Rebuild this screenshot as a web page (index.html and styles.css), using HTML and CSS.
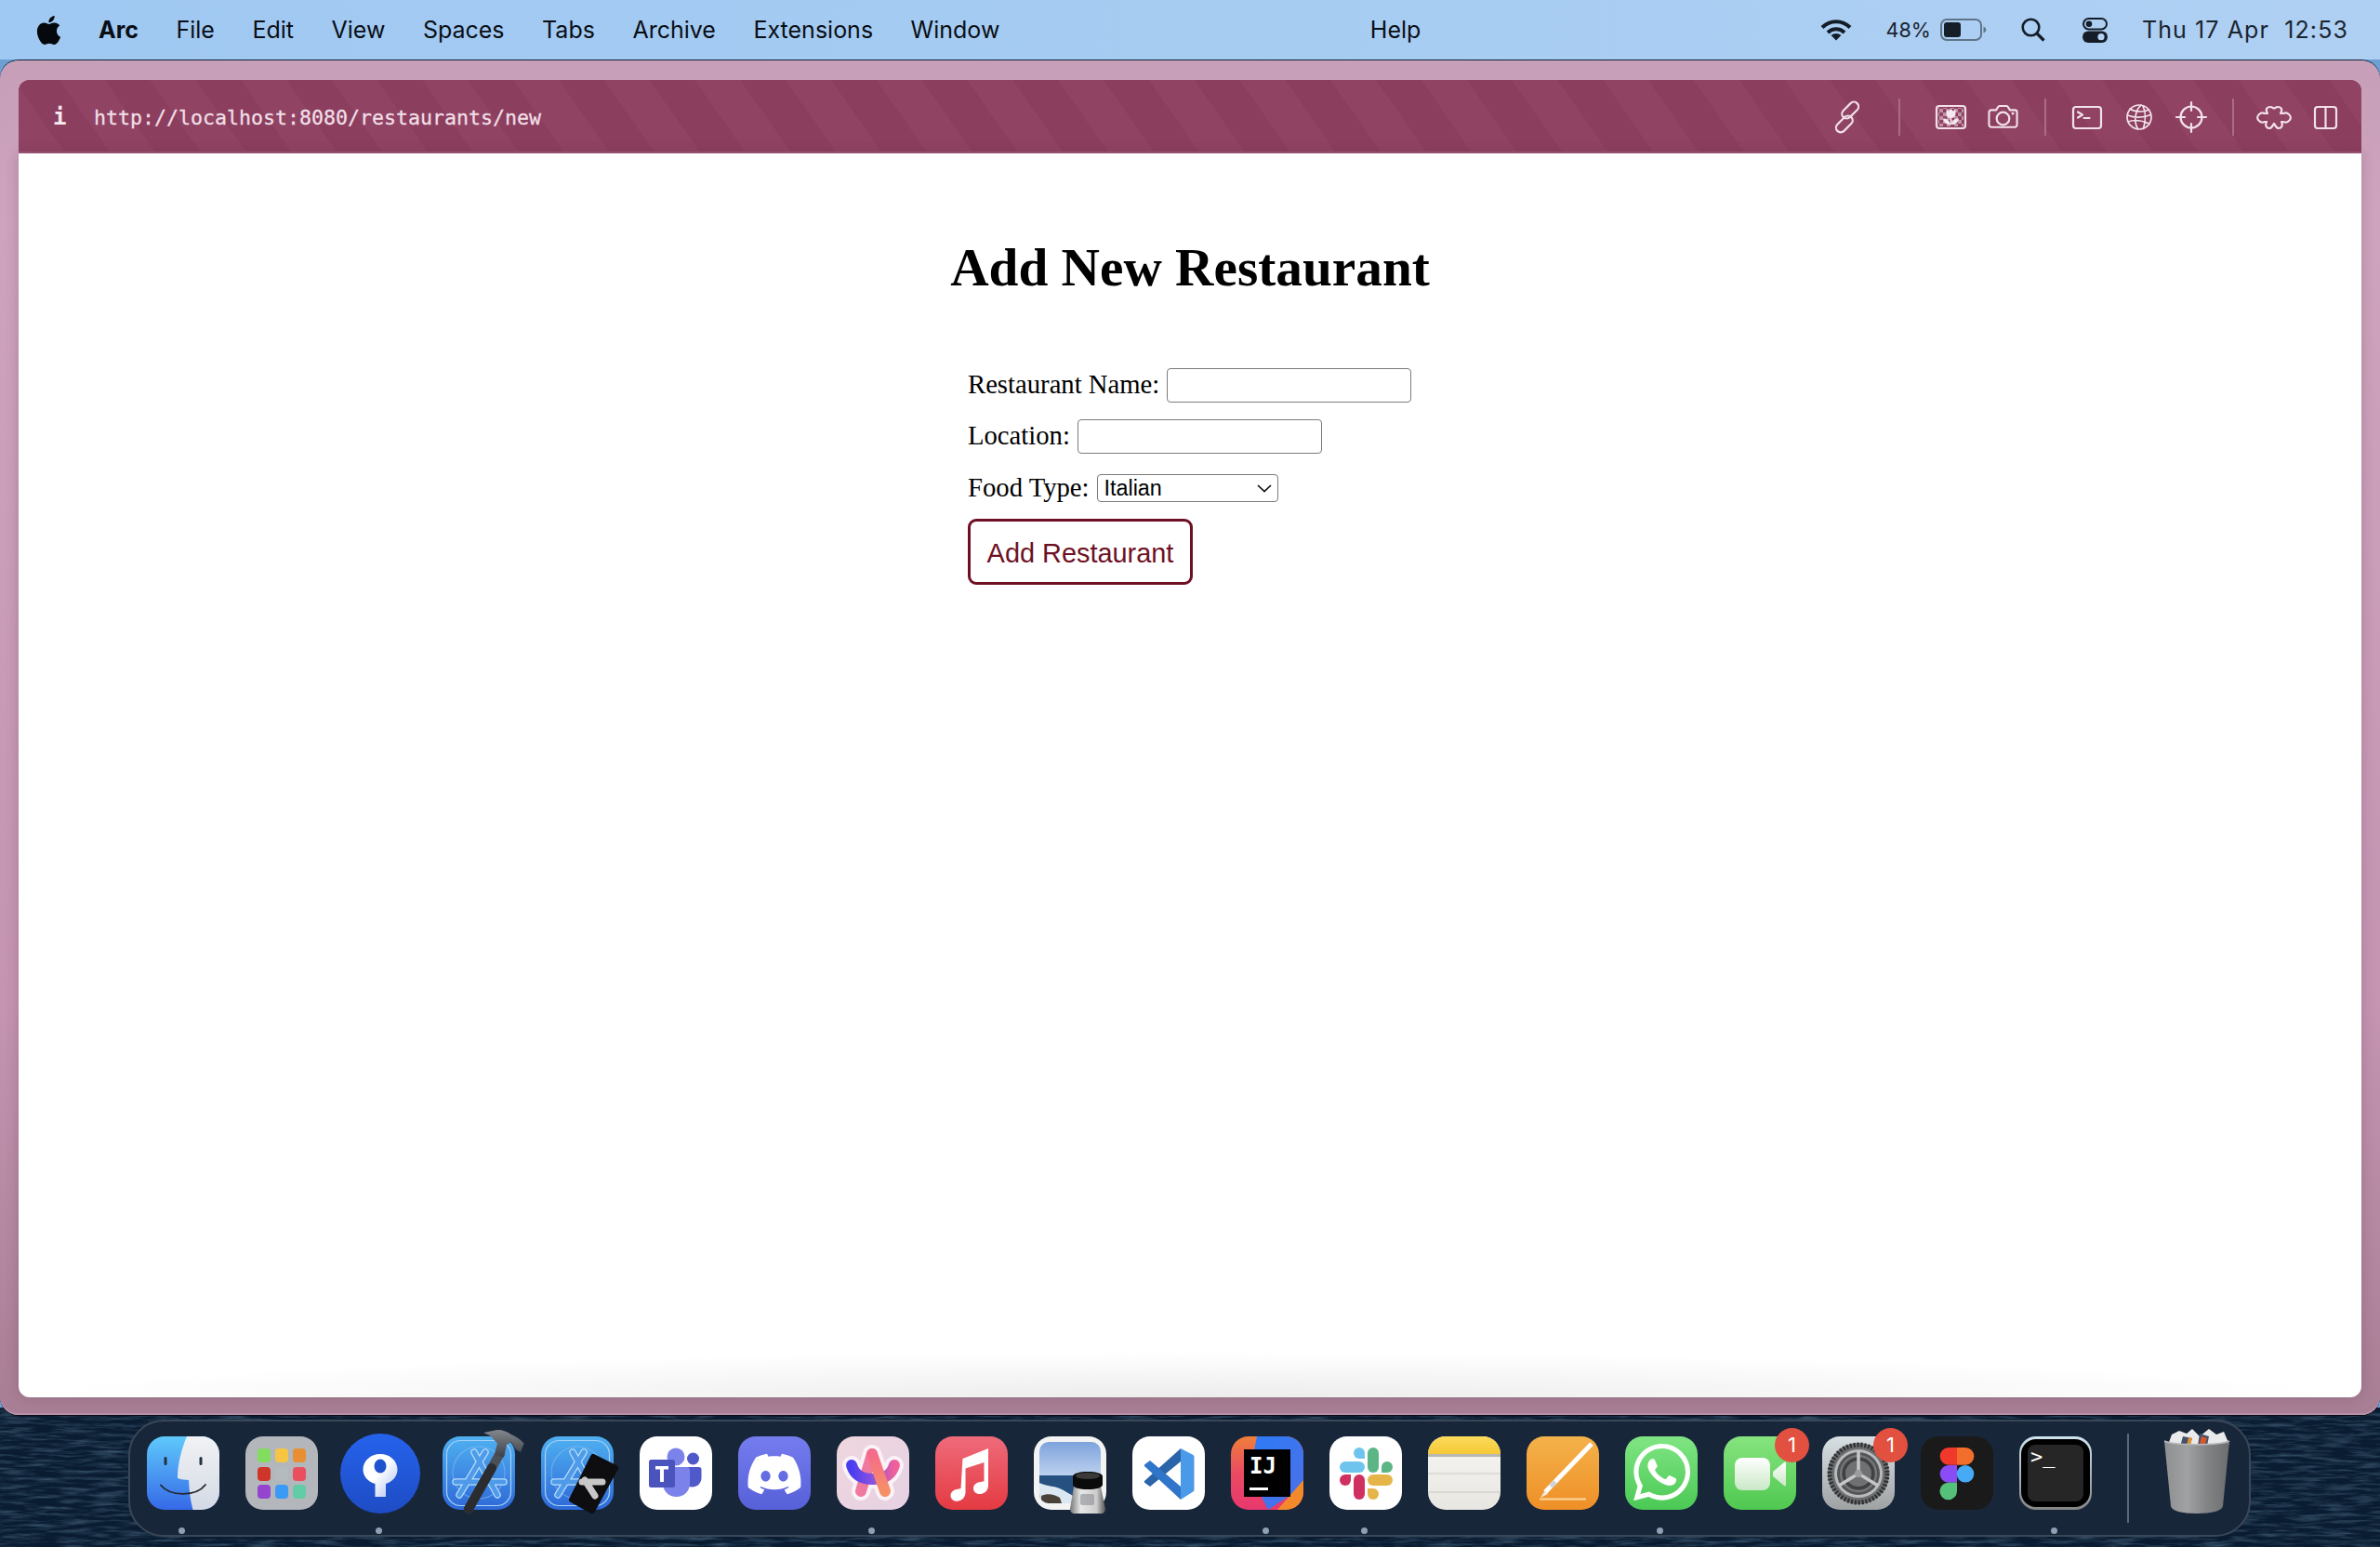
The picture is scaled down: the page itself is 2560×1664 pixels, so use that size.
FILE: index.html
```html
<!DOCTYPE html>
<html lang="en">
<head>
  <meta charset="UTF-8">
  <title>Add New Restaurant</title>
  <link rel="stylesheet" href="styles.css">
</head>
<body>

<!-- wallpaper behind the dock -->
<svg class="wallpaper" width="2560" height="150">
  <filter id="water" x="0" y="0" width="100%" height="100%">
    <feTurbulence type="fractalNoise" baseFrequency="0.03 0.28" numOctaves="4" seed="7"/>
    <feColorMatrix type="matrix" values="0 0 0 0 0.14  0 0 0 0 0.27  0 0 0 0 0.39  1.8 0 0 0 -0.74"/>
  </filter>
  <rect width="2560" height="150" fill="#0a1c31"/>
  <rect width="2560" height="150" filter="url(#water)" opacity="0.55"/>
</svg>

<!-- menu bar -->
<header class="menubar">
  <svg class="apple" width="27" height="31" viewBox="2 0 20 24"><path fill="#05080c" d="M12.152 6.896c-.948 0-2.415-1.078-3.96-1.04-2.04.027-3.91 1.183-4.961 3.014-2.117 3.675-.546 9.103 1.519 12.09 1.013 1.454 2.208 3.09 3.792 3.039 1.52-.065 2.09-.987 3.935-.987 1.831 0 2.35.987 3.96.948 1.637-.026 2.676-1.48 3.676-2.948 1.156-1.688 1.636-3.325 1.662-3.415-.039-.013-3.182-1.221-3.22-4.857-.026-3.04 2.48-4.494 2.597-4.559-1.429-2.09-3.623-2.324-4.39-2.376-2-.156-3.675 1.09-4.61 1.09zM15.53 3.83c.843-1.012 1.4-2.427 1.245-3.83-1.207.052-2.662.805-3.532 1.818-.78.896-1.454 2.338-1.273 3.714 1.338.104 2.715-.688 3.559-1.701"/></svg>
  <nav class="menu-items">
    <span class="menu-app">Arc</span>
    <span>File</span>
    <span>Edit</span>
    <span>View</span>
    <span>Spaces</span>
    <span>Tabs</span>
    <span>Archive</span>
    <span>Extensions</span>
    <span>Window</span>
    <span class="menu-help">Help</span>
  </nav>
  <div class="status">
    <svg class="status-wifi" width="34" height="24" viewBox="0 0 34 24" fill="none" stroke="#141d27" stroke-width="4" stroke-linecap="butt">
      <path d="M2 9.5C10.5 1 23.5 1 32 9.5"/>
      <path d="M8 15c5.2-5 12.8-5 18 0"/>
      <path fill="#141d27" stroke="none" d="M17 23.5l-5.4-5.6c3-2.7 7.8-2.7 10.8 0z"/>
    </svg>
    <span class="status-pct">48%</span>
    <svg class="status-battery" width="50" height="24" viewBox="0 0 50 24">
      <rect x="1" y="1" width="43" height="22" rx="6" fill="none" stroke="#5f7488" stroke-width="2"/>
      <rect x="4" y="4" width="18" height="16" rx="3" fill="#161e28"/>
      <path d="M46.5 8.5c2 .8 2.8 2 2.8 3.5s-.8 2.7-2.8 3.5z" fill="#5f7488"/>
    </svg>
    <svg class="status-search" width="26" height="26" viewBox="0 0 26 26" fill="none" stroke="#141d27" stroke-width="2.6">
      <circle cx="10.5" cy="10.5" r="8.8"/>
      <path d="M17 17l7.5 7.5" stroke-width="3.2"/>
    </svg>
    <svg class="status-control" width="27" height="27" viewBox="0 0 27 27">
      <rect x="1" y="1" width="25" height="11.5" rx="5.7" fill="none" stroke="#141d27" stroke-width="2"/>
      <circle cx="7" cy="6.7" r="3.3" fill="#141d27"/>
      <rect y="14.5" width="27" height="12.5" rx="6.2" fill="#141d27"/>
      <circle cx="20" cy="20.7" r="3.6" fill="#b4d2f4"/>
    </svg>
    <span class="status-clock">Thu 17 Apr  12:53</span>
  </div>
</header>

<!-- browser window -->
<main class="window">
  <div class="toolbar">
    <span class="site-info">i</span>
    <span class="url">http://localhost:8080/restaurants/new</span>

    <div class="tools">
      <svg class="tool" width="30" height="30" viewBox="0 0 30 30"><g transform="rotate(-45 15 15)"><rect x="-3" y="13" width="21" height="10" rx="5"/><rect x="12" y="7" width="21" height="10" rx="5"/></g></svg>
      <span class="tool-divider divider-link"></span>

      <div class="tool-group group-capture">
        <svg class="tool" width="33" height="26" viewBox="0 0 33 26">
          <defs><pattern id="checks" width="8" height="8" patternUnits="userSpaceOnUse"><rect width="4" height="4" fill="#f3e1e9" stroke="none" opacity=".5"/><rect x="4" y="4" width="4" height="4" fill="#f3e1e9" stroke="none" opacity=".5"/></pattern></defs>
          <rect x="1" y="1" width="31" height="24" rx="3"/>
          <rect x="3" y="3" width="27" height="20" fill="url(#checks)" stroke="none"/>
          <path fill="#f6e8ee" stroke="none" d="M11.5 4.5l2.6 2 2.4-2.4 2.4 2.4 2.6-2v5.2c0 2.6-2 4.4-5 4.4s-5-1.800-5-4.400z"/>
          <path fill="#f6e8ee" stroke="none" d="M15.700 14h1.600v7h-1.600zM8 14.500c3.600-.3 7 1.600 7.700 6.500-4 .2-7-2.300-7.700-6.500zM25 14.500c-3.600-.3-7 1.600-7.700 6.500 4 .2 7-2.300 7.700-6.500z"/>
        </svg>
        <svg class="tool" width="33" height="26" viewBox="0 0 33 26">
          <path d="M3.500 6h5.500l2-3.500c.3-.6.800-1 1.500-1h8c.7 0 1.200.4 1.500 1l2 3.500h5.500c1.300 0 2.500 1 2.500 2.500v14c0 1.300-1.200 2.500-2.500 2.500h-26c-1.300 0-2.500-1.200-2.500-2.500v-14c0-1.500 1.200-2.500 2.500-2.500z" transform="translate(.5 -.5) scale(.97)"/>
          <circle cx="16.500" cy="14.500" r="6.800"/>
          <circle cx="27" cy="9" r="1.500" fill="#f3e1e9" stroke="none"/>
        </svg>
      </div>
      <span class="tool-divider divider-capture"></span>

      <div class="tool-group group-dev">
        <svg class="tool" width="32" height="25" viewBox="0 0 32 25">
          <rect x="1" y="1" width="30" height="23" rx="3"/>
          <path d="M6 6.500l5 3-5 3M12.500 13h6"/>
        </svg>
        <svg class="tool thin" width="28" height="28" viewBox="0 0 28 28">
          <circle cx="14" cy="14" r="13"/>
          <path d="M16 1.200c-6 5-8.500 17-3.500 25.600M18 2c3 6 3 16 .5 24.500M4 5c5 3.500 15 4 20.500 1M1.500 12c7 2.800 17 2.600 25-.5M2 19c6-2.500 14-1.800 23 2"/>
        </svg>
        <svg class="tool" width="32" height="32" viewBox="0 0 32 32">
          <circle cx="16" cy="16" r="11.500"/>
          <path d="M16 0v9M16 23v9M0 16h9M23 16h9"/>
        </svg>
      </div>
      <span class="tool-divider divider-dev"></span>

      <div class="tool-group group-panel">
        <svg class="tool" width="38" height="25" viewBox="0 0 38 25"><path d="M12 8C9 3 12 1 15 1c2 0 3 1.500 4 1.500S21 1 23 1c3 0 6 2 3 7h3c2-1 4-1 6 1 2.500 2 2.500 5 0 7-2 2-4 2-6 1h-2c2 4 0 7-3 7-2.500 0-3.500-3-5-5-1.500 2-2.500 5-5 5-3 0-5-3-3-7H9c-2 1-4 1-6-1-2.500-2-2.500-5 0-7 2-2 4-2 6-1z"/></svg>
        <svg class="tool" width="25" height="25" viewBox="0 0 25 25">
          <rect x="1" y="1" width="23" height="23" rx="3"/>
          <path d="M12.500 1v23"/>
        </svg>
      </div>
    </div>
  </div>

  <section class="page">
    <h1>Add New Restaurant</h1>
    <form class="restaurant-form">
      <div class="form-row">
        <label for="name">Restaurant Name:</label>
        <input type="text" id="name">
      </div>
      <div class="form-row">
        <label for="location">Location:</label>
        <input type="text" id="location">
      </div>
      <div class="form-row form-row-select">
        <label for="foodType">Food Type:</label>
        <div class="select-wrap">
          <select id="foodType">
            <option>Italian</option>
          </select>
          <svg class="select-arrow" width="16" height="9" viewBox="0 0 16 9"><path d="M1 1l7 6.500L15 1" fill="none" stroke="#111" stroke-width="1.700"/></svg>
        </div>
      </div>
      <button type="button" class="submit-btn">Add Restaurant</button>
    </form>
  </section>
</main>

<!-- dock -->
<footer class="dock">

  <!-- finder -->
  <div class="dock-item">
    <svg class="app" width="78" height="80" viewBox="0 0 78 80">
      <defs>
        <linearGradient id="finderL" x1="0" y1="0" x2="0" y2="1"><stop offset="0" stop-color="#5fc9fb"/><stop offset="1" stop-color="#3569e8"/></linearGradient>
        <linearGradient id="finderR" x1="0" y1="0" x2="0" y2="1"><stop offset="0" stop-color="#f1f2f4"/><stop offset="1" stop-color="#d3dae5"/></linearGradient>
        <clipPath id="finderClip"><rect width="78" height="79" rx="19"/></clipPath>
      </defs>
      <g clip-path="url(#finderClip)">
        <rect width="78" height="79" fill="url(#finderL)"/>
        <path fill="url(#finderR)" d="M43 0C37 14 33 30 33 45c4 1.500 8 1.800 12 2 .5 12 2 23 4.500 32H78V0z"/>
      </g>
      <rect x="18.500" y="22" width="3" height="9" rx="1.500" fill="#26313f"/>
      <rect x="56.500" y="22" width="3" height="9" rx="1.500" fill="#26313f"/>
      <path d="M15 52.500C25 65 53 65 63 52" fill="none" stroke="#24272c" stroke-width="1.800" stroke-linecap="round"/>
    </svg>
    <span class="dot"></span>
  </div>

  <!-- launchpad -->
  <div class="dock-item no-dot">
    <svg class="app" width="78" height="80" viewBox="0 0 78 80">
      <rect width="78" height="79" rx="19" fill="#b3b6bb"/>
      <rect x="13" y="13" width="14" height="15" rx="4" fill="#82dd5f"/><rect x="32" y="13" width="14" height="15" rx="4" fill="#f6c643"/><rect x="51" y="13" width="14" height="15" rx="4" fill="#e88f34"/>
      <rect x="13" y="33" width="14" height="15" rx="4" fill="#cf3528"/><rect x="32" y="33" width="14" height="15" rx="4" fill="#b4bbbf"/><rect x="51" y="33" width="14" height="15" rx="4" fill="#ea4f5f"/>
      <rect x="13" y="52" width="14" height="15" rx="4" fill="#9444cf"/><rect x="32" y="52" width="14" height="15" rx="4" fill="#3a9af6"/><rect x="51" y="52" width="14" height="15" rx="4" fill="#62cca6"/>
    </svg>
  </div>

  <!-- sip -->
  <div class="dock-item">
    <svg class="app" width="78" height="80" viewBox="0 0 78 80">
      <defs>
        <linearGradient id="sipBg" x1="0" y1="0" x2="0" y2="1"><stop offset="0" stop-color="#2563ec"/><stop offset="1" stop-color="#1e4cc4"/></linearGradient>
        <linearGradient id="sipKey" x1="0" y1="0" x2="1" y2="1"><stop offset=".45" stop-color="#fff"/><stop offset="1" stop-color="#a9bdee"/></linearGradient>
      </defs>
      <circle cx="39" cy="40" r="43" fill="url(#sipBg)"/>
      <path fill="url(#sipKey)" d="M39 19c10.500 0 18.500 7.500 18.500 16.500 0 7-4.500 13-12.500 15.500v14H33.500V51C25 48.500 20.500 42.500 20.500 35.500 20.500 26.500 28.500 19 39 19z"/>
      <ellipse cx="39" cy="32" rx="6.500" ry="7.500" fill="#1f52cf"/>
    </svg>
    <span class="dot"></span>
  </div>

  <!-- xcode -->
  <div class="dock-item no-dot">
    <svg class="app" width="78" height="80" viewBox="0 0 78 80">
      <defs>
        <linearGradient id="xcBg" x1="0" y1="0" x2="0" y2="1"><stop offset="0" stop-color="#4fb0f0"/><stop offset="1" stop-color="#2e68d8"/></linearGradient>
        <linearGradient id="hammer" x1="0" y1="0" x2="0" y2="1"><stop offset="0" stop-color="#83878e"/><stop offset="1" stop-color="#3c3f45"/></linearGradient>
      </defs>
      <rect width="78" height="79" rx="19" fill="url(#xcBg)"/>
      <g fill="none" stroke="#a6d3f8" stroke-width="1.200">
        <rect x="4.500" y="4.500" width="69" height="70" rx="15"/>
        <circle cx="39" cy="39" r="28" opacity=".4"/>
      </g>
      <g fill="none" stroke-linecap="round">
        <path d="M34 17l25 46M46 17L18 63M14 49h52" stroke="#b8dcfa" stroke-width="7.500"/>
        <path d="M34 17l25 46M46 17L18 63M14 49h52" stroke="#4f9be9" stroke-width="5"/>
      </g>
      <path d="M62 18L28 78" stroke="#4b4f56" stroke-width="10" stroke-linecap="round"/>
      <path d="M53 34L28 78" stroke="#2a2c30" stroke-width="10" stroke-linecap="round"/>
      <path fill="url(#hammer)" d="M44-4L59-7c6 0 11 2 15 5 4 2 9 4 13.600 9.600L84 17l-5-2.700L74 6l-5 3-3 13.600-10-3.300 3-11.700-8-8.300z"/>
    </svg>
  </div>

  <!-- simulator -->
  <div class="dock-item no-dot">
    <svg class="app" width="78" height="80" viewBox="0 0 78 80">
      <defs><linearGradient id="simBg" x1="0" y1="0" x2="0" y2="1"><stop offset="0" stop-color="#4fb0f0"/><stop offset="1" stop-color="#2e68d8"/></linearGradient></defs>
      <rect width="78" height="79" rx="19" fill="url(#simBg)"/>
      <g fill="none" stroke="#a6d3f8" stroke-width="1.200">
        <rect x="4.500" y="4.500" width="69" height="70" rx="15"/>
        <circle cx="39" cy="39" r="28" opacity=".4"/>
      </g>
      <g fill="none" stroke-linecap="round">
        <path d="M34 17l25 46M46 17L18 63M14 49h52" stroke="#b8dcfa" stroke-width="7.500"/>
        <path d="M34 17l25 46M46 17L18 63M14 49h52" stroke="#4f9be9" stroke-width="5"/>
      </g>
      <path d="M56 22l24 12-25 46-22-12z" fill="#0e0e10" stroke="#0e0e10" stroke-width="6" stroke-linejoin="round"/>
      <path d="M47 47l11 17M44 49h22" stroke="#c8c8c8" stroke-width="7" stroke-linecap="round"/>
    </svg>
  </div>

  <!-- teams -->
  <div class="dock-item no-dot">
    <svg class="app" width="78" height="80" viewBox="0 0 78 80">
      <rect width="78" height="79" rx="19" fill="#fff"/>
      <circle cx="57.500" cy="24" r="6.500" fill="#5059c9"/>
      <path d="M49 33h15c1.500 0 2.500 1 2.500 2.500v9c0 6-4.500 10-10 10-3 0-5-1-7.500-2z" fill="#5059c9"/>
      <circle cx="39" cy="22" r="9.500" fill="#7b83eb"/>
      <path d="M25 33h26c1.500 0 3 1.500 3 3v15c0 8-6.500 14-14.500 14S25 59 25 51z" fill="#7b83eb"/>
      <rect x="10" y="25" width="28" height="30" rx="2.500" fill="#4b53bc"/>
      <path d="M17 32h14v3.500h-5V49h-4V35.500h-5z" fill="#fff"/>
    </svg>
  </div>

  <!-- discord -->
  <div class="dock-item no-dot">
    <svg class="app" width="78" height="80" viewBox="0 0 78 80">
      <defs><linearGradient id="discordBg" x1="0" y1="0" x2="0" y2="1"><stop offset="0" stop-color="#757cee"/><stop offset="1" stop-color="#5660d8"/></linearGradient></defs>
      <rect width="78" height="79" rx="19" fill="url(#discordBg)"/>
      <path transform="translate(10.500 12) scale(2.375)" fill="#fff" d="M20.317 4.3698a19.7913 19.7913 0 00-4.8851-1.5152.0741.0741 0 00-.0785.0371c-.211.3753-.4447.8648-.6083 1.2495-1.8447-.2762-3.68-.2762-5.4868 0-.1636-.3933-.4058-.8742-.6177-1.2495a.077.077 0 00-.0785-.037 19.7363 19.7363 0 00-4.8852 1.515.0699.0699 0 00-.0321.0277C.5334 9.0458-.319 13.5799.0992 18.0578a.0824.0824 0 00.0312.0561c2.0528 1.5076 4.0413 2.4228 5.9929 3.0294a.0777.0777 0 00.0842-.0276c.4616-.6304.8731-1.2952 1.226-1.9942a.076.076 0 00-.0416-.1057c-.6528-.2476-1.2743-.5495-1.8722-.8923a.077.077 0 01-.0076-.1277c.1258-.0943.2517-.1923.3718-.2914a.0743.0743 0 01.0776-.0105c3.9278 1.7933 8.18 1.7933 12.0614 0a.0739.0739 0 01.0785.0095c.1202.099.246.1981.3728.2924a.077.077 0 01-.0066.1276 12.2986 12.2986 0 01-1.873.8914.0766.0766 0 00-.0407.1067c.3604.698.7719 1.3628 1.225 1.9932a.076.076 0 00.0842.0286c1.961-.6067 3.9495-1.5219 6.0023-3.0294a.077.077 0 00.0313-.0552c.5004-5.177-.8382-9.6739-3.5485-13.6604a.061.061 0 00-.0312-.0286zM8.02 15.3312c-1.1825 0-2.1569-1.0857-2.1569-2.419 0-1.3332.9555-2.4189 2.157-2.4189 1.2108 0 2.1757 1.0952 2.1568 2.419 0 1.3332-.9555 2.4189-2.1569 2.4189zm7.9748 0c-1.1825 0-2.1569-1.0857-2.1569-2.419 0-1.3332.9554-2.4189 2.1569-2.4189 1.2108 0 2.1757 1.0952 2.1568 2.419 0 1.3332-.946 2.4189-2.1568 2.4189Z"/>
    </svg>
  </div>

  <!-- arc -->
  <div class="dock-item">
    <svg class="app" width="78" height="80" viewBox="0 0 78 80">
      <defs>
        <linearGradient id="arcBg" x1="0" y1="0" x2="1" y2="1"><stop offset="0" stop-color="#efd6de"/><stop offset="1" stop-color="#e6d2e4"/></linearGradient>
        <linearGradient id="arcLoop" x1="0" y1="0" x2="1" y2="0"><stop offset="0" stop-color="#4a3df0"/><stop offset=".5" stop-color="#8a52e0"/><stop offset="1" stop-color="#f0609a"/></linearGradient>
        <linearGradient id="arcLeg" x1="0" y1="0" x2="0" y2="1"><stop offset="0" stop-color="#f56b8a"/><stop offset="1" stop-color="#f59066"/></linearGradient>
      </defs>
      <rect width="78" height="79" rx="19" fill="url(#arcBg)"/>
      <g fill="none" stroke-linecap="round" stroke-linejoin="round">
        <path d="M16 31c3 10 10 15 23 15s20-5 23-15M26 59L38 19l14 40" stroke="#fbf2f8" stroke-width="20"/>
        <path d="M38 19L26 59" stroke="#f07a9f" stroke-width="12"/>
        <path d="M16 31c3 10 10 15 23 15s20-5 23-15" stroke="url(#arcLoop)" stroke-width="12"/>
        <path d="M38 19l14 40" stroke="url(#arcLeg)" stroke-width="12"/>
      </g>
    </svg>
    <span class="dot"></span>
  </div>

  <!-- music -->
  <div class="dock-item no-dot">
    <svg class="app" width="78" height="80" viewBox="0 0 78 80">
      <defs><linearGradient id="musicBg" x1="0" y1="0" x2="0" y2="1"><stop offset="0" stop-color="#ef6b7b"/><stop offset="1" stop-color="#e43a42"/></linearGradient></defs>
      <rect width="78" height="79" rx="19" fill="url(#musicBg)"/>
      <path fill="#fff" d="M29.500 24L57 13v39.500c0 5.500-3.500 9-8.500 9.500-4.500.3-7.500-2.500-7.500-6 0-3.800 3-6 6.500-6.700l5-1V28l-20 6.500v25.500c0 5.500-3.500 9.200-8.500 9.700-4.500.3-7.500-2.500-7.500-6 0-3.800 3-6 6.500-6.700l4.500-1z"/>
    </svg>
  </div>

  <!-- preview -->
  <div class="dock-item no-dot">
    <svg class="app" width="78" height="80" viewBox="0 0 78 80">
      <defs>
        <linearGradient id="sky" x1="0" y1="0" x2="0" y2="1"><stop offset="0" stop-color="#7ea3dd"/><stop offset="1" stop-color="#c0d3ef"/></linearGradient>
        <linearGradient id="glass" x1="0" y1="0" x2="1" y2="0"><stop offset="0" stop-color="#777"/><stop offset=".3" stop-color="#e8e8e8"/><stop offset=".75" stop-color="#ccc"/><stop offset="1" stop-color="#555"/></linearGradient>
        <clipPath id="photoClip"><rect x="6" y="6" width="66" height="66" rx="10"/></clipPath>
      </defs>
      <rect width="78" height="79" rx="19" fill="#f3f3f3"/>
      <g clip-path="url(#photoClip)">
        <rect x="6" y="6" width="66" height="38" fill="url(#sky)"/>
        <rect x="6" y="42" width="66" height="30" fill="#26507f"/>
        <path d="M6 50c8 4 18 3 26 8s12 6 20 14H6z" fill="#dbe8f1"/>
        <path d="M8 64c6-3 14-2 20 2l2 6H8z" fill="#4a4238"/>
      </g>
      <path d="M43 54h29l5 24c0 3-2 5-5 5H44c-3 0-5-2-5-5z" fill="url(#glass)"/>
      <rect x="50" y="62" width="15" height="12" rx="2" fill="#8b8e94" opacity=".6"/>
      <path d="M42 43c0-3 7-5 16-5s16 2 16 5v9c0 3-7 5-16 5s-16-2-16-5z" fill="#0b0b0b"/>
      <ellipse cx="58" cy="42.500" rx="13" ry="3.500" fill="#3a3a3a"/>
    </svg>
  </div>

  <!-- vs code -->
  <div class="dock-item no-dot">
    <svg class="app" width="78" height="80" viewBox="0 0 78 80">
      <rect width="78" height="79" rx="19" fill="#fff"/>
      <path d="M52 13L52 27 19 54l-5.500-4c-1-.8-1-1.800 0-2.600z" fill="#2a65aa"/>
      <path d="M13.500 32.500c-1-.8-1-1.800 0-2.600L19 26 52 54v14z" fill="#2f75c9"/>
      <path d="M52 13l12.500 6.500c1.400.7 2 1.700 2 3v34.500c0 1.300-.6 2.300-2 3L52 68z" fill="#4b99e9"/>
    </svg>
  </div>

  <!-- intellij -->
  <div class="dock-item">
    <svg class="app" width="78" height="80" viewBox="0 0 78 80">
      <defs>
        <clipPath id="ijClip"><rect width="78" height="79" rx="19"/></clipPath>
        <linearGradient id="ijBlue" x1="0" y1="0" x2="1" y2="1"><stop offset="0" stop-color="#2d7bf8"/><stop offset="1" stop-color="#4d6fe6"/></linearGradient>
        <linearGradient id="ijPink" x1="0" y1="0" x2="0" y2="1"><stop offset="0" stop-color="#ef7f3a"/><stop offset=".5" stop-color="#ea4a62"/><stop offset="1" stop-color="#e8386e"/></linearGradient>
      </defs>
      <g clip-path="url(#ijClip)">
        <rect width="78" height="79" fill="url(#ijPink)"/>
        <path d="M28 0h50v54L40 79 20 40z" fill="url(#ijBlue)"/>
        <path d="M50 79l28-32v32z" fill="#f28a2c"/>
      </g>
      <rect x="14" y="14" width="50" height="51" fill="#000"/>
      <text class="ij-text" x="20" y="40">IJ</text>
      <rect x="20" y="55" width="20" height="3" fill="#fff"/>
    </svg>
    <span class="dot"></span>
  </div>

  <!-- slack -->
  <div class="dock-item">
    <svg class="app" width="78" height="80" viewBox="0 0 78 80">
      <rect width="78" height="79" rx="19" fill="#fff"/>
      <rect x="11" y="27" width="27" height="12" rx="6" fill="#6fc4ee"/><path d="M38 24V18a6 6 0 1 0-6 6z" fill="#6fc4ee"/>
      <rect x="41" y="12" width="12" height="27" rx="6" fill="#5cb585"/><path d="M56 39h6a6 6 0 1 0-6-6z" fill="#5cb585"/>
      <rect x="26" y="41" width="12" height="27" rx="6" fill="#d03060"/><path d="M23 41h-6a6 6 0 1 0 6 6z" fill="#d03060"/>
      <rect x="41" y="41" width="27" height="12" rx="6" fill="#e5b54a"/><path d="M41 56v6a6 6 0 1 0 6-6z" fill="#e5b54a"/>
    </svg>
    <span class="dot"></span>
  </div>

  <!-- notes -->
  <div class="dock-item">
    <svg class="app" width="78" height="80" viewBox="0 0 78 80">
      <defs>
        <clipPath id="notesClip"><rect width="78" height="79" rx="19"/></clipPath>
        <linearGradient id="notesTop" x1="0" y1="0" x2="0" y2="1"><stop offset="0" stop-color="#fbdc5c"/><stop offset="1" stop-color="#f6c836"/></linearGradient>
        <linearGradient id="notesPaper" x1="0" y1="0" x2="0" y2="1"><stop offset="0" stop-color="#f7f6f3"/><stop offset="1" stop-color="#e8e6e1"/></linearGradient>
      </defs>
      <g clip-path="url(#notesClip)">
        <rect width="78" height="79" fill="url(#notesPaper)"/>
        <rect width="78" height="19" fill="url(#notesTop)"/>
        <rect y="19" width="78" height="3" fill="#b9b8b4"/>
        <rect y="39" width="78" height="2" fill="#dedcd8"/>
        <rect y="59" width="78" height="2" fill="#dad8d3"/>
      </g>
    </svg>
  </div>

  <!-- pages -->
  <div class="dock-item no-dot">
    <svg class="app" width="78" height="80" viewBox="0 0 78 80">
      <defs><linearGradient id="pagesBg" x1="0" y1="0" x2="0" y2="1"><stop offset="0" stop-color="#f4b24a"/><stop offset="1" stop-color="#ef8f27"/></linearGradient></defs>
      <rect width="78" height="79" rx="19" fill="url(#pagesBg)"/>
      <path d="M20 60L70 8" stroke="#fff" stroke-width="5"/>
      <path d="M20 58l-5 8 8-4z" fill="#f3e9da"/>
      <path d="M26 54l5-5" stroke="#cfd3d8" stroke-width="5"/>
      <rect x="14" y="66.500" width="50" height="2" fill="#fbd7a0"/>
    </svg>
  </div>

  <!-- whatsapp -->
  <div class="dock-item">
    <svg class="app" width="78" height="80" viewBox="0 0 78 80">
      <defs><linearGradient id="waBg" x1="0" y1="0" x2="0" y2="1"><stop offset="0" stop-color="#80e583"/><stop offset="1" stop-color="#4bc955"/></linearGradient></defs>
      <rect width="78" height="79" rx="19" fill="url(#waBg)"/>
      <path transform="translate(9 8) scale(2.550)" fill="#fff" d="M17.472 14.382c-.297-.149-1.758-.867-2.03-.967-.273-.099-.471-.148-.67.15-.197.297-.767.966-.94 1.164-.173.199-.347.223-.644.075-.297-.15-1.255-.463-2.39-1.475-.883-.788-1.48-1.761-1.653-2.059-.173-.297-.018-.458.13-.606.134-.133.298-.347.446-.52.149-.174.198-.298.298-.497.099-.198.05-.371-.025-.52-.075-.149-.669-1.612-.916-2.207-.242-.579-.487-.5-.669-.51-.173-.008-.371-.01-.57-.01-.198 0-.52.074-.792.372-.272.297-1.04 1.016-1.04 2.479 0 1.462 1.065 2.875 1.213 3.074.149.198 2.096 3.2 5.077 4.487.709.306 1.262.489 1.694.625.712.227 1.36.195 1.871.118.571-.085 1.758-.719 2.006-1.413.248-.694.248-1.289.173-1.413-.074-.124-.272-.198-.57-.347m-5.421 7.403h-.004a9.87 9.87 0 01-5.031-1.378l-.361-.214-3.741.982.998-3.648-.235-.374a9.86 9.86 0 01-1.51-5.26c.001-5.45 4.436-9.884 9.888-9.884 2.64 0 5.122 1.03 6.988 2.898a9.825 9.825 0 012.893 6.994c-.003 5.45-4.437 9.884-9.885 9.884m8.413-18.297A11.815 11.815 0 0012.05 0C5.495 0 .16 5.335.157 11.892c0 2.096.547 4.142 1.588 5.945L.057 24l6.305-1.654a11.882 11.882 0 005.683 1.448h.005c6.554 0 11.89-5.335 11.893-11.893a11.821 11.821 0 00-3.48-8.413Z"/>
    </svg>
    <span class="dot"></span>
  </div>

  <!-- facetime -->
  <div class="dock-item no-dot">
    <svg class="app" width="78" height="80" viewBox="0 0 78 80">
      <defs>
        <linearGradient id="ftBg" x1="0" y1="0" x2="0" y2="1"><stop offset="0" stop-color="#86e47f"/><stop offset="1" stop-color="#4fc850"/></linearGradient>
        <linearGradient id="ftCam" x1="0" y1="0" x2="0" y2="1"><stop offset="0" stop-color="#fff"/><stop offset="1" stop-color="#c9e8c6"/></linearGradient>
      </defs>
      <rect width="78" height="79" rx="19" fill="url(#ftBg)"/>
      <rect x="12" y="23" width="38" height="35" rx="8" fill="url(#ftCam)"/>
      <path d="M53 38l12-10c1-.8 2-.3 2 1v23c0 1.300-1 1.800-2 1L53 43z" fill="url(#ftCam)"/>
    </svg>
    <span class="badge">1</span>
  </div>

  <!-- system settings -->
  <div class="dock-item no-dot">
    <svg class="app" width="78" height="80" viewBox="0 0 78 80">
      <defs><linearGradient id="setBg" x1="0" y1="0" x2="0" y2="1"><stop offset="0" stop-color="#d8e0e4"/><stop offset="1" stop-color="#9fa2a3"/></linearGradient></defs>
      <rect width="78" height="79" rx="19" fill="url(#setBg)"/>
      <circle cx="39" cy="40" r="33" fill="#6c6e70"/>
      <circle cx="39" cy="40" r="31" fill="none" stroke="#2f3133" stroke-width="5" stroke-dasharray="2.200 1.700"/>
      <circle cx="39" cy="40" r="26" fill="#b8bbbd"/>
      <circle cx="39" cy="40" r="23" fill="#525456"/>
      <circle cx="39" cy="40" r="19" fill="none" stroke="#77797b" stroke-width="2"/>
      <circle cx="39" cy="40" r="17" fill="#3e4042"/>
      <circle cx="39" cy="40" r="14" fill="#6f7173"/>
      <path d="M39 40V16M39 40L18 53M39 40l21 13" stroke="#c5c7c9" stroke-width="3.500"/>
      <circle cx="39" cy="40" r="4" fill="#9a9c9e"/>
    </svg>
    <span class="badge">1</span>
  </div>

  <!-- figma -->
  <div class="dock-item no-dot">
    <svg class="app" width="78" height="80" viewBox="0 0 78 80">
      <rect width="78" height="79" rx="19" fill="#1a1a1b"/>
      <path d="M39 12H30a9.300 9.300 0 0 0 0 18.700h9z" fill="#f0392b"/>
      <path d="M39 12h9a9.300 9.300 0 0 1 0 18.700h-9z" fill="#f26e2c"/>
      <path d="M39 31H30a9.300 9.300 0 0 0 0 18.700h9z" fill="#8a4cf5"/>
      <circle cx="48" cy="40.300" r="9.300" fill="#46aaf7"/>
      <path d="M30 49.700h9V59a9.300 9.300 0 1 1-9-9.300z" fill="#55c07a"/>
    </svg>
  </div>

  <!-- terminal -->
  <div class="dock-item">
    <svg class="app" width="78" height="80" viewBox="0 0 78 80">
      <defs><linearGradient id="termRim" x1="0" y1="0" x2="0" y2="1"><stop offset="0" stop-color="#cfe3ee"/><stop offset="1" stop-color="#858585"/></linearGradient></defs>
      <rect width="78" height="79" rx="18" fill="url(#termRim)"/>
      <rect x="2" y="3" width="74" height="73" rx="16" fill="#000"/>
      <rect x="9" y="9" width="60" height="61" rx="8" fill="#262626"/>
      <text class="term-text" x="12" y="29">&gt;_</text>
    </svg>
    <span class="dot"></span>
  </div>

  <span class="dock-separator"></span>

  <!-- trash -->
  <div class="dock-item dock-trash">
    <svg class="app" width="70" height="92" viewBox="0 0 70 92">
      <defs>
        <linearGradient id="trashBody" x1="0" y1="0" x2="1" y2="0"><stop offset="0" stop-color="#8e8f90"/><stop offset=".35" stop-color="#a0a1a3"/><stop offset=".65" stop-color="#838486"/><stop offset="1" stop-color="#6c6d6f"/></linearGradient>
      </defs>
      <path d="M8 6l8-4 8 3 6-5 8 8 10-8 8 6 8-3 6 14H4z" fill="#e9eaec"/>
      <path d="M20 8l10 2-3 9h-10zM38 5l10 3-2 10H36z" fill="#45506a"/>
      <path d="M26 9l4 1-2 8h-4z" fill="#e3902f"/><path d="M40 8l6 2-2 6h-6z" fill="#d6562a"/>
      <path d="M0 13c10 5 60 5 70 0l-7 70c-.5 5-12 8-28 8S7.500 88 7 83z" fill="url(#trashBody)"/>
      <path d="M0 13c10 5 60 5 70 0" stroke="#b6b7b9" stroke-width="1.500" fill="none"/>
    </svg>
  </div>
</footer>

</body>
</html>
```

FILE: styles.css
```css
* {
  box-sizing: border-box;
}
html, body {
  margin: 0;
  padding: 0;
}
body {
  width: 2560px;
  height: 1664px;
  overflow: hidden;
  position: relative;
  display: flex;
  flex-direction: column;
  background: #6d9fd2;
  font-family: "Liberation Serif", serif;
}
svg {
  display: block;
  flex-shrink: 0;
}
.wallpaper {
  position: absolute;
  left: 0;
  bottom: 0;
}

/* menu bar */
.menubar {
  position: relative;
  height: 64px;
  flex-shrink: 0;
  display: flex;
  align-items: center;
  padding-left: 39px;
  background: linear-gradient(to right, #9fc8f2, #a6ccf2 50%, #afd0f3);
  font-family: Inter, "Liberation Sans", sans-serif;
  font-size: 25px;
  color: #0a0f16;
}
.menu-items {
  display: flex;
  align-items: center;
  gap: 40.5px;
  margin-left: 40px;
}
.menu-app {
  font-weight: 700;
}
.menu-help {
  margin-left: 358px;
}
.status {
  display: flex;
  align-items: center;
  margin-left: auto;
  padding-right: 34px;
  color: #1a2430;
}
.status-pct {
  margin-left: 37px;
  font-size: 21.5px;
}
.status-battery {
  margin-left: 10px;
}
.status-search {
  margin-left: 37px;
}
.status-control {
  margin-left: 40px;
}
.status-clock {
  margin-left: 37px;
  white-space: pre;
  letter-spacing: 1.1px;
}

/* window */
.window {
  position: relative;
  height: 1457px;
  flex-shrink: 0;
  margin-top: 1px;
  padding: 21px 20px 19px;
  display: flex;
  flex-direction: column;
  border-radius: 20px;
  background: linear-gradient(to bottom, #c79fb9, #cea3bd 12%, #c494b1 70%, #a87e94);
  box-shadow: 0 -1px 0 #0f2238, 0 1px 0 #0a0f18, inset 0 -2px 0 #b88fa8;
}
.toolbar {
  height: 79px;
  flex-shrink: 0;
  display: flex;
  align-items: center;
  padding: 3px 26px 0 37px;
  border-radius: 12px 12px 0 0;
  border-bottom: 2px solid #a0577a;
  background-color: #8c3e5e;
  background-image: repeating-linear-gradient(55deg, #904363 0, #904363 40px, #8c3e5e 40px, #8c3e5e 80px);
}
.site-info {
  width: 14px;
  margin-right: 30px;
  font-family: "DejaVu Sans Mono", monospace;
  font-weight: 700;
  font-size: 24px;
  color: #f7e9ef;
}
.url {
  margin-top: 1px;
  font-family: "DejaVu Sans Mono", monospace;
  font-size: 21.6px;
  color: #f0dfe6;
  -webkit-text-stroke: 0.3px #f0dfe6;
}
.tools {
  display: flex;
  align-items: center;
  margin-left: auto;
}
.tool {
  overflow: visible;
  fill: none;
  stroke: #f3e1e9;
  stroke-width: 2.2;
  stroke-linecap: round;
  stroke-linejoin: round;
}
.tool.thin {
  stroke-width: 1.7;
}
.tool-group {
  display: flex;
  align-items: center;
}
.group-capture {
  gap: 23px;
}
.group-dev {
  gap: 26px;
}
.group-panel {
  gap: 24px;
}
.tool-divider {
  width: 2px;
  height: 40px;
  background: #ab6b88;
}
.divider-link {
  margin: 0 38px 0 40px;
}
.divider-capture {
  margin: 0 28px;
}
.divider-dev {
  margin: 0 24px 0 28px;
}

/* page content */
.page {
  flex: 1;
  display: flex;
  flex-direction: column;
  align-items: center;
  padding-top: 91px;
  border-radius: 0 0 12px 12px;
  background: radial-gradient(ellipse 1250px 48px at 50% 100%, #ececec, rgba(236, 236, 236, 0)) #fff;
  box-shadow: 0 0 14px rgba(70, 30, 50, 0.22);
}
h1 {
  margin: 0 0 76px;
  font-size: 57.3px;
  font-weight: 700;
  line-height: 64px;
  color: #000;
}
.restaurant-form {
  display: flex;
  flex-direction: column;
  align-items: flex-start;
  width: 478px;
}
.form-row {
  display: flex;
  align-items: center;
  gap: 8px;
  height: 37px;
  margin-bottom: 18px;
  font-size: 28.7px;
  color: #000;
}
.form-row label {
  margin-bottom: 3px;
}
.form-row-select {
  margin-bottom: 15px;
}
.form-row-select label {
  margin-bottom: 0;
}
.form-row input {
  width: 263px;
  height: 37px;
  padding: 0 4px;
  border: 1.5px solid #7b7b7b;
  border-radius: 4px;
  background: #fff;
}
.select-wrap {
  position: relative;
}
.select-wrap select {
  display: block;
  width: 195px;
  height: 30px;
  padding: 0 0 0 7px;
  appearance: none;
  border: 1.5px solid #7b7b7b;
  border-radius: 4px;
  background: #fff;
  font-family: "Liberation Sans", sans-serif;
  font-size: 23.3px;
  color: #000;
}
.select-arrow {
  position: absolute;
  right: 7px;
  top: 11px;
  pointer-events: none;
}
.submit-btn {
  width: 242px;
  height: 71px;
  padding: 4px 0 0;
  border: 3.5px solid #6e1023;
  border-radius: 9px;
  background: #fff;
  font-family: "Liberation Sans", sans-serif;
  font-size: 28.9px;
  color: #6e1023;
}

/* dock */
.dock {
  position: relative;
  width: 2283px;
  height: 126px;
  margin: 5px 0 0 138px;
  padding: 16px 21px 0 18px;
  display: flex;
  align-items: flex-start;
  gap: 28px;
  border: 2px solid #3a4757;
  border-radius: 38px;
  background: #18263a;
}
.dock-item {
  position: relative;
  width: 78px;
  flex-shrink: 0;
}
.app {
  overflow: visible;
}
.dot {
  display: block;
  width: 7px;
  height: 7px;
  margin: 18px 0 0 34px;
  border-radius: 50%;
  background: #8ea0b4;
}
.badge {
  position: absolute;
  left: 55px;
  top: -9px;
  width: 37px;
  height: 37px;
  border-radius: 50%;
  background: #e2503f;
  color: #fff;
  font-family: Inter, "Liberation Sans", sans-serif;
  font-size: 22px;
  line-height: 37px;
  text-align: center;
}
.dock-separator {
  width: 2px;
  height: 96px;
  margin: -3px 0 0 10px;
  background: #5b6877;
}
.dock-trash {
  width: 70px;
  margin: -8px 0 0 10px;
}
.ij-text {
  font-family: "DejaVu Sans Mono", monospace;
  font-weight: 700;
  font-size: 24px;
  fill: #fff;
}
.term-text {
  font-family: "DejaVu Sans Mono", monospace;
  font-size: 22px;
  fill: #fff;
}
```
